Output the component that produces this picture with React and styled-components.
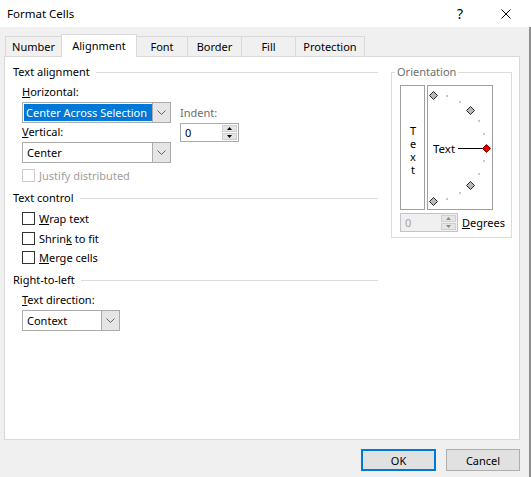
import styled, { createGlobalStyle } from "styled-components";

const GlobalStyle = createGlobalStyle`
  html, body {
    margin: 0;
    padding: 0;
  }
  body {
    width: 531px;
    height: 477px;
    overflow: hidden;
    background: #f0f0f0;
    color: #000;
    font-family: "Noto Sans", "Open Sans", sans-serif;
    font-size: 11px;
  }
  * {
    box-sizing: border-box;
  }
`;

const Window = styled.div`
  display: flex;
  flex-direction: column;
  width: 531px;
  height: 477px;
`;

const TitleBar = styled.div`
  display: flex;
  align-items: center;
  height: 27px;
  padding: 0 2px 0 7px;
  background: #fff;
  font-size: 11.5px;
`;

const Title = styled.span`
  flex: 1;
`;

const CaptionButton = styled.div`
  display: flex;
  align-items: center;
  justify-content: center;
  width: 46px;
  height: 27px;
  font-size: 14px;
`;

const Body = styled.div`
  flex: 1;
  display: flex;
  flex-direction: column;
  border-right: 2px solid #8f8f8f;
`;

const TabStrip = styled.div`
  display: flex;
  align-items: flex-end;
  height: 29px;
  padding-left: 5px;
`;

const Tab = styled.div`
  position: relative;
  display: flex;
  align-items: center;
  justify-content: center;
  width: ${({ $w }) => $w}px;
  height: ${({ $active }) => ($active ? 23 : 20)}px;
  margin-left: -1px;
  margin-bottom: ${({ $active }) => ($active ? -1 : 0)}px;
  padding-bottom: ${({ $active }) => ($active ? 2 : 0)}px;
  border: 1px solid #d9d9d9;
  border-bottom: none;
  background: ${({ $active }) => ($active ? "#fff" : "#f0f0f0")};
  z-index: ${({ $active }) => ($active ? 1 : 0)};

  &:first-child {
    margin-left: 0;
  }
`;

const Panel = styled.div`
  display: flex;
  width: 516px;
  height: 384px;
  margin-left: 4px;
  padding: 7px 7px 0 8px;
  background: #fff;
  border: 1px solid #d9d9d9;
`;

const LeftColumn = styled.div`
  flex: 1;
`;

const SectionHeading = styled.div`
  display: flex;
  align-items: center;
  gap: 6px;
  height: 16px;
  line-height: 16px;
  margin-top: ${({ $mt }) => $mt || 0}px;

  &::after {
    content: "";
    flex: 1;
    height: 1px;
    background: #dcdcdc;
  }
`;

const Indented = styled.div`
  padding-left: 9px;
`;

const AlignGrid = styled.div`
  display: flex;
  gap: 9px;
`;

const Column = styled.div`
  display: flex;
  flex-direction: column;
  padding-top: ${({ $pt }) => $pt || 0}px;
`;

const FieldLabel = styled.div`
  height: 16px;
  line-height: 16px;
  margin-top: ${({ $mt }) => $mt || 0}px;
  color: ${({ $muted }) => ($muted ? "#6d6d6d" : "#000")};
`;

const Select = styled.div`
  display: flex;
  width: ${({ $w }) => $w}px;
  height: 21px;
  margin-top: 2px;
  border: 1px solid #ababab;
  background: #fff;
`;

const SelectValue = styled.div`
  flex: 1;
  display: flex;
  padding: 1px 0 1px 1px;
`;

const ValueText = styled.span`
  flex: 1;
  display: flex;
  align-items: center;
  padding-left: ${({ $selected }) => ($selected ? 2 : 3)}px;
  background: ${({ $selected }) => ($selected ? "#0078d7" : "transparent")};
  color: ${({ $selected }) => ($selected ? "#fff" : "#000")};
  white-space: nowrap;
  overflow: hidden;
`;

const DropButton = styled.div`
  display: flex;
  align-items: center;
  justify-content: center;
  width: 18px;
  background: #e5e5e5;
  border-left: 1px solid #ababab;
`;

const Spin = styled.div`
  display: flex;
  width: ${({ $w }) => $w}px;
  height: 19px;
  margin-top: ${({ $mt }) => $mt || 0}px;
  border: 1px solid ${({ $disabled }) => ($disabled ? "#c4c4c4" : "#ababab")};
  background: ${({ $disabled }) => ($disabled ? "#f0f0f0" : "#fff")};
  color: ${({ $disabled }) => ($disabled ? "#a0a0a0" : "#000")};
`;

const SpinValue = styled.div`
  flex: 1;
  display: flex;
  align-items: center;
  padding-left: 4px;
`;

const SpinButtons = styled.div`
  display: flex;
  flex-direction: column;
  justify-content: center;
  gap: 1px;
  width: 16px;
  padding: 1px 1px 1px 0;
`;

const SpinArrow = styled.div`
  flex: 1;
  display: flex;
  align-items: center;
  justify-content: center;
  background: #e5e5e5;
  border: 1px solid #cfcfcf;
`;

const CheckRow = styled.label`
  display: flex;
  align-items: center;
  gap: 4px;
  height: 16px;
  margin-top: ${({ $mt }) => $mt || 0}px;
  color: ${({ $disabled }) => ($disabled ? "#a0a0a0" : "#000")};
`;

const CheckBox = styled.span`
  width: 13px;
  height: 13px;
  border: 1px solid ${({ $disabled }) => ($disabled ? "#cccccc" : "#333")};
  background: #fff;
`;

const Orientation = styled.fieldset`
  width: 121px;
  height: 174px;
  margin: 0 0 0 13px;
  padding: 5px 0 0 8px;
  border: 1px solid #dcdcdc;
`;

const Legend = styled.legend`
  margin-left: -5px;
  padding: 0 2px;
  line-height: 16px;
  color: #6d6d6d;
`;

const OrientRow = styled.div`
  display: flex;
  gap: 2px;
`;

const VerticalText = styled.div`
  display: flex;
  align-items: center;
  justify-content: center;
  width: 25px;
  height: 125px;
  padding-top: 2px;
  border: 1px solid #a0a0a0;

  span {
    writing-mode: vertical-lr;
    text-orientation: upright;
    letter-spacing: -2px;
    line-height: 14px;
  }
`;

const Dial = styled.div`
  width: 66px;
  height: 125px;
  border: 1px solid #a0a0a0;

  svg {
    display: block;
  }
`;

const DegreesRow = styled.div`
  display: flex;
  align-items: center;
  gap: 4px;
  margin-top: 3px;
`;

const Footer = styled.div`
  display: flex;
  justify-content: flex-end;
  gap: 10px;
  padding: 9px 9px 0 0;
`;

const Button = styled.button`
  width: ${({ $w }) => $w}px;
  height: 22px;
  padding: 0;
  font-family: inherit;
  font-size: 11px;
  color: #000;
  background: #e1e1e1;
  border: ${({ $primary }) => ($primary ? "2px solid #0078d7" : "1px solid #adadad")};
`;

function Chevron() {
  return (
    <svg width="9" height="5" viewBox="0 0 9 5">
      <polyline points="0.5,0.5 4.5,4.5 8.5,0.5" fill="none" stroke="#606060" strokeWidth="1" />
    </svg>
  );
}

function Triangle({ down, color = "#000" }) {
  return (
    <svg width="5" height="3" viewBox="0 0 5 3">
      <polygon points={down ? "0,0 5,0 2.5,3" : "2.5,0 5,3 0,3"} fill={color} />
    </svg>
  );
}

function Dropdown({ width, value, selected }) {
  return (
    <Select $w={width}>
      <SelectValue>
        <ValueText $selected={selected}>{value}</ValueText>
      </SelectValue>
      <DropButton>
        <Chevron />
      </DropButton>
    </Select>
  );
}

function Spinner({ width, value, disabled, mt }) {
  const arrow = disabled ? "#888" : "#000";
  return (
    <Spin $w={width} $disabled={disabled} $mt={mt}>
      <SpinValue>{value}</SpinValue>
      <SpinButtons>
        <SpinArrow>
          <Triangle color={arrow} />
        </SpinArrow>
        <SpinArrow>
          <Triangle down color={arrow} />
        </SpinArrow>
      </SpinButtons>
    </Spin>
  );
}

function Diamond({ x, y, red }) {
  const h = 4;
  return (
    <polygon
      points={`${x},${y - h} ${x + h},${y} ${x},${y + h} ${x - h},${y}`}
      fill={red ? "#e00000" : "#b8b8b8"}
      stroke={red ? "#800000" : "#2a2a2a"}
      strokeWidth="1"
    />
  );
}

function OrientationDial() {
  const cx = 5;
  const cy = 61.5;
  const r = 53;
  const dots = [75, 60, 30, 15, -15, -30, -60, -75];
  const diamonds = [90, 45, -45, -90];
  const pt = (deg) => [cx + r * Math.cos((deg * Math.PI) / 180), cy - r * Math.sin((deg * Math.PI) / 180)];

  return (
    <svg width="64" height="123" viewBox="0 0 64 123">
      {dots.map((d) => {
        const [x, y] = pt(d);
        return <rect key={d} x={Math.round(x) - 1} y={Math.round(y) - 1} width="2" height="2" fill="#c8c8c8" />;
      })}
      {diamonds.map((d) => {
        const [x, y] = pt(d);
        return <Diamond key={d} x={Math.round(x) + 0.5} y={Math.round(y) + 0.5} />;
      })}
      <text x="5" y="66.5" fontSize="11.5" fontFamily="Noto Sans, sans-serif" fill="#000">
        Text
      </text>
      <line x1="30" y1="62.5" x2="55" y2="62.5" stroke="#000" strokeWidth="1" />
      <Diamond x={58.5} y={62.5} red />
    </svg>
  );
}

const tabs = [
  { label: "Number", w: 57 },
  { label: "Alignment", w: 76, active: true },
  { label: "Font", w: 52 },
  { label: "Border", w: 55 },
  { label: "Fill", w: 55 },
  { label: "Protection", w: 70 },
];

export default function App() {
  return (
    <>
      <GlobalStyle />
      <Window>
        <TitleBar>
          <Title>Format Cells</Title>
          <CaptionButton>?</CaptionButton>
          <CaptionButton>
            <svg width="10" height="10" viewBox="0 0 10 10">
              <path d="M0.5 0.5 L9.5 9.5 M9.5 0.5 L0.5 9.5" stroke="#000" strokeWidth="1" />
            </svg>
          </CaptionButton>
        </TitleBar>

        <Body>
          <TabStrip>
            {tabs.map((t) => (
              <Tab key={t.label} $w={t.w} $active={t.active}>
                {t.label}
              </Tab>
            ))}
          </TabStrip>

          <Panel>
            <LeftColumn>
              <SectionHeading>Text alignment</SectionHeading>
              <Indented>
                <AlignGrid>
                  <Column>
                    <FieldLabel $mt={4}>
                      <u>H</u>orizontal:
                    </FieldLabel>
                    <Dropdown width={149} value="Center Across Selection" selected />
                    <FieldLabel $mt={1}>
                      <u>V</u>ertical:
                    </FieldLabel>
                    <Dropdown width={149} value="Center" />
                  </Column>
                  <Column $pt={25}>
                    <FieldLabel $muted>Indent:</FieldLabel>
                    <Spinner width={59} value="0" mt={2} />
                  </Column>
                </AlignGrid>
                <CheckRow $mt={4} $disabled>
                  <CheckBox $disabled />
                  Justify distributed
                </CheckRow>
              </Indented>

              <SectionHeading $mt={7}>Text control</SectionHeading>
              <Indented>
                <CheckRow $mt={4}>
                  <CheckBox />
                  <span>
                    <u>W</u>rap text
                  </span>
                </CheckRow>
                <CheckRow $mt={4}>
                  <CheckBox />
                  <span>
                    Shrin<u>k</u> to fit
                  </span>
                </CheckRow>
                <CheckRow $mt={3}>
                  <CheckBox />
                  <span>
                    <u>M</u>erge cells
                  </span>
                </CheckRow>
              </Indented>

              <SectionHeading $mt={7}>Right-to-left</SectionHeading>
              <Indented>
                <FieldLabel $mt={4}>
                  <u>T</u>ext direction:
                </FieldLabel>
                <Dropdown width={98} value="Context" />
              </Indented>
            </LeftColumn>

            <Orientation>
              <Legend>Orientation</Legend>
              <OrientRow>
                <VerticalText>
                  <span>Text</span>
                </VerticalText>
                <Dial>
                  <OrientationDial />
                </Dial>
              </OrientRow>
              <DegreesRow>
                <Spinner width={58} value="0" disabled />
                <span>
                  <u>D</u>egrees
                </span>
              </DegreesRow>
            </Orientation>
          </Panel>

          <Footer>
            <Button $w={75} $primary>
              OK
            </Button>
            <Button $w={74}>Cancel</Button>
          </Footer>
        </Body>
      </Window>
    </>
  );
}
